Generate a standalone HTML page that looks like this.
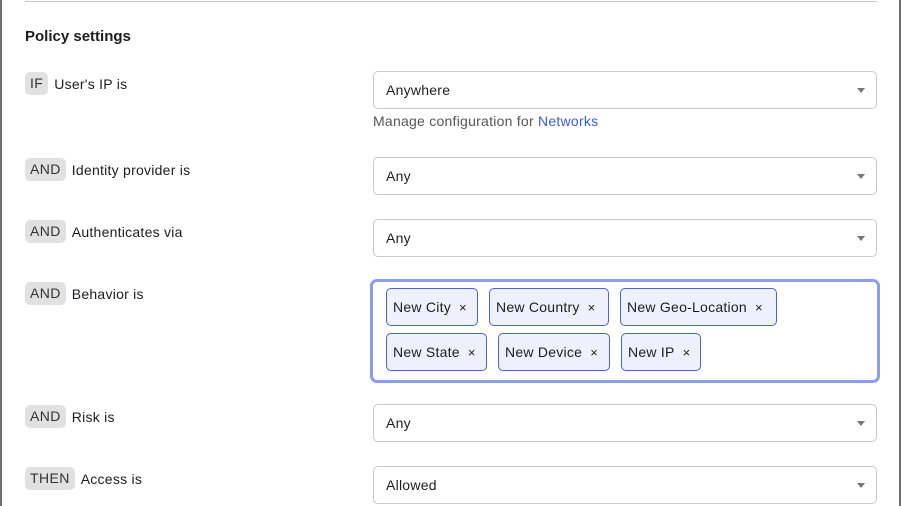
<!DOCTYPE html>
<html><head><style>
*{box-sizing:border-box;margin:0;padding:0}
body{width:902px;height:506px;overflow:hidden;background:#fff;font-family:"Liberation Sans",sans-serif;color:#1d1d21;font-size:14px;position:relative;letter-spacing:0.25px}
.lb{position:absolute;left:0;top:0;width:2px;height:506px;background:#6e6e6e}
.rb{position:absolute;left:899px;top:0;width:2px;height:506px;background:#6e6e6e}
.tl{position:absolute;left:25px;top:1px;width:852px;height:1px;background:#c8c8c8}
h2{position:absolute;left:25px;top:28px;font-size:15px;font-weight:bold;letter-spacing:0}
.row{position:absolute;left:25px;display:flex;align-items:center}
.bd{background:#e1e1e1;border-radius:5px;height:23px;padding:0 5px;line-height:23px;margin-right:6px;color:#333;letter-spacing:0.4px}
.sel{position:absolute;left:373px;width:504px;height:38px;border:1px solid #c9c9c9;border-radius:5px;padding-left:12px;line-height:36px}
.sel:after{content:"";position:absolute;right:11px;top:16px;border-left:4px solid transparent;border-right:4px solid transparent;border-top:5px solid #777}
.note{position:absolute;left:373px;top:113px;color:#555}
.note a{color:#3b5bdb;text-decoration:none}
.ms{position:absolute;left:370px;top:279px;width:510px;height:104px;border:3px solid #8c9eeb;border-radius:7px}
.tag{position:absolute;height:38px;border:1px solid #4c63d8;background:#eef0fb;border-radius:5px;padding-left:6px;line-height:36px;white-space:nowrap}
.tag span{font-size:13px;margin-left:8px}
</style></head><body>
<div class="lb"></div><div class="rb"></div><div class="tl"></div>
<h2>Policy settings</h2>
<div class="row" style="top:72px"><span class="bd">IF</span>User's IP is</div>
<div class="sel" style="top:71px">Anywhere</div>
<div class="note">Manage configuration for <a>Networks</a></div>
<div class="row" style="top:158px"><span class="bd">AND</span>Identity provider is</div>
<div class="sel" style="top:157px">Any</div>
<div class="row" style="top:220px"><span class="bd">AND</span>Authenticates via</div>
<div class="sel" style="top:219px">Any</div>
<div class="row" style="top:282px"><span class="bd">AND</span>Behavior is</div>
<div class="ms"></div>
<div class="tag" style="left:386px;top:288px;width:92px">New City<span>×</span></div>
<div class="tag" style="left:489px;top:288px;width:120px">New Country<span>×</span></div>
<div class="tag" style="left:620px;top:288px;width:157px">New Geo-Location<span>×</span></div>
<div class="tag" style="left:386px;top:333px;width:101px">New State<span>×</span></div>
<div class="tag" style="left:498px;top:333px;width:112px">New Device<span>×</span></div>
<div class="tag" style="left:621px;top:333px;width:80px">New IP<span>×</span></div>
<div class="row" style="top:405px"><span class="bd">AND</span>Risk is</div>
<div class="sel" style="top:404px">Any</div>
<div class="row" style="top:467px"><span class="bd">THEN</span>Access is</div>
<div class="sel" style="top:466px">Allowed</div>
</body></html>
